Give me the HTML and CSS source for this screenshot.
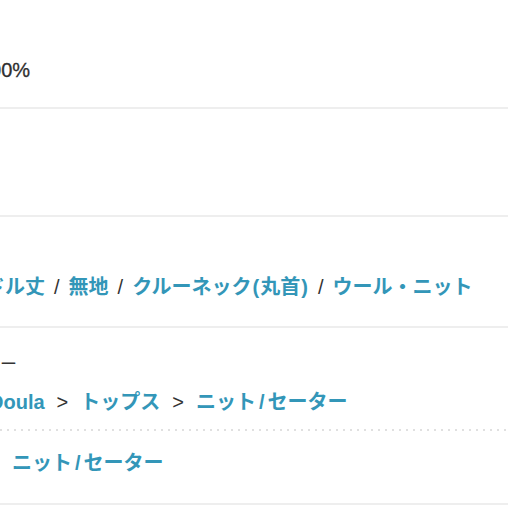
FILE: index.html
```html
<!DOCTYPE html>
<html lang="ja">
<head>
<meta charset="utf-8">
<title>商品詳細</title>
<link rel="stylesheet" href="styles.css">
</head>
<body>
<main class="sheet">
  <section class="row row-material">
    <p class="plain">100%</p>
  </section>
  <section class="row row-empty"></section>
  <section class="row row-tags">
    <p class="tags"><a class="link" href="#">ミドル丈</a><span class="sep">/</span><a class="link" href="#">無地</a><span class="sep">/</span><a class="link" href="#">クルーネック<span class="paren">(</span>丸首<span class="paren">)</span></a><span class="sep">/</span><a class="link" href="#">ウール・ニット</a></p>
  </section>
  <section class="row row-category">
    <h3 class="label">カテゴリー</h3>
    <nav class="crumbs"><a class="link" href="#">Doula</a><span class="arrow">&gt;</span><a class="link" href="#">トップス</a><span class="arrow">&gt;</span><a class="link" href="#">ニット<span class="slash">/</span>セーター</a></nav>
    <div class="dots"></div>
    <p class="sub"><a class="link" href="#">ニット<span class="slash">/</span>セーター</a></p>
  </section>
</main>
</body>
</html>
```
FILE: styles.css
```css
html, body {
  margin: 0;
  padding: 0;
  background: #ffffff;
}
body {
  overflow: hidden;
  font-family: "Liberation Sans", "Noto Sans CJK JP", sans-serif;
  color: #333333;
}
.sheet {
  margin-left: -70px;
  width: 578px;
}
.row {
  border-bottom: 2px solid #eeeeee;
}
p, h3 {
  margin: 0;
}
.link {
  color: #3396b8;
  font-weight: 700;
  text-decoration: none;
}
.row-material {
  padding: 56px 0 23px 49px;
}
.plain {
  font-size: 20px;
  line-height: 28px;
  color: #2e2e2e;
  -webkit-text-stroke: 0.3px #2e2e2e;
}
.row-empty {
  height: 106px;
}
.row-tags {
  padding: 56px 0 25px 35px;
}
.tags {
  font-size: 20px;
  line-height: 28px;
  white-space: nowrap;
}
.sep {
  margin: 0 9px;
  color: #333333;
  font-weight: 400;
}
.paren {
  margin: 0 1px;
}
.slash {
  margin: 0 3px;
}
.row-category {
  padding: 25px 0 26px 0;
  display: flex;
  flex-direction: column;
}
.label {
  font-size: 17px;
  line-height: 24px;
  font-weight: 400;
  color: #333333;
  padding-left: 2px;
}
.crumbs {
  margin-top: 11px;
  padding-left: 59px;
  font-size: 20px;
  line-height: 28px;
  white-space: nowrap;
}
.arrow {
  margin: 0 12px;
  color: #333333;
  font-weight: 400;
}
.dots {
  margin-top: 13px;
  height: 2px;
  background-image: linear-gradient(to right, #e0e0e0 2px, transparent 2px);
  background-size: 7px 2px;
  background-repeat: repeat-x;
}
.sub {
  margin-top: 18px;
  padding-left: 82px;
  font-size: 20px;
  line-height: 28px;
}
```
